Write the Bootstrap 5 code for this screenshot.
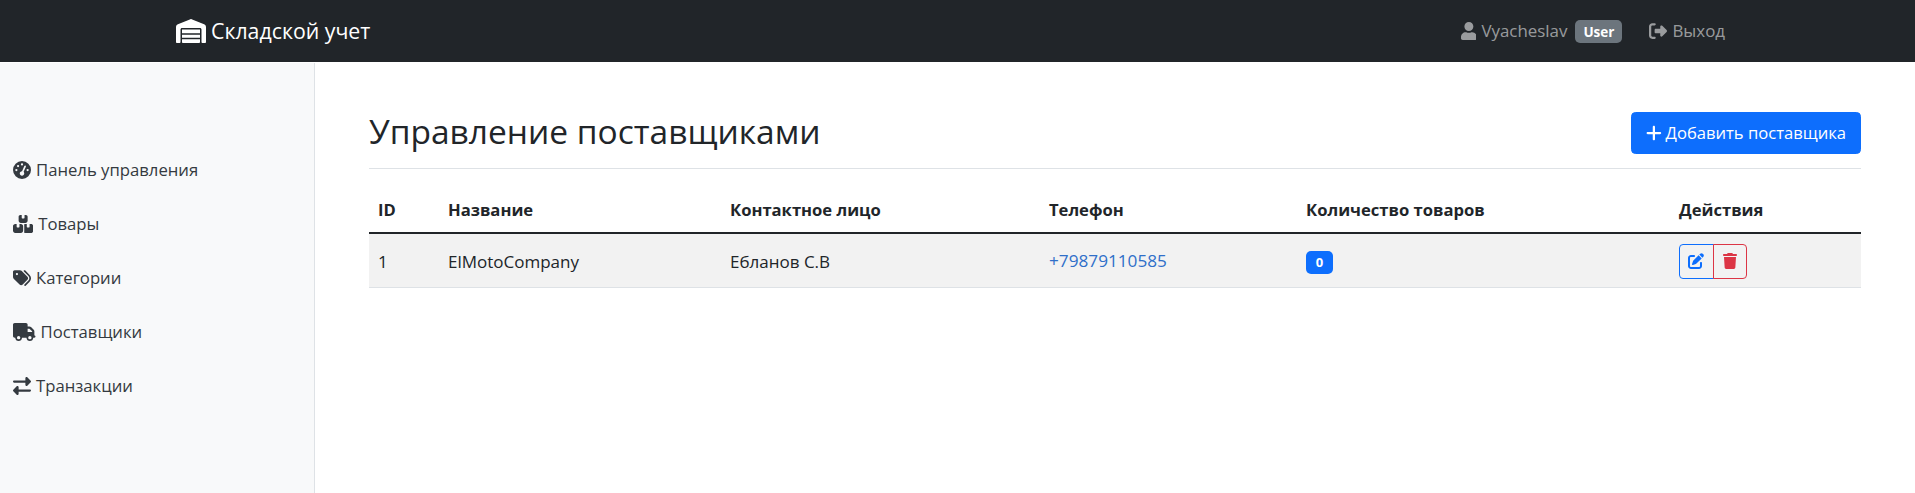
<!doctype html>
<html lang="ru">
<head>
<meta charset="utf-8">
<title>Складской учет</title>
<link href="https://cdn.jsdelivr.net/npm/bootstrap@5.3.0/dist/css/bootstrap.min.css" rel="stylesheet">
<style>
body{font-family:"Open Sans","Noto Sans",sans-serif;font-size:17px;color:#212529;height:493px;overflow:hidden}
.ic{fill:currentColor;height:18px;width:auto;flex:none;display:inline-block}
.topbar{height:62px;padding:0 190px 0 176px;background:#212529}
.topbar .navbar-brand{font-size:21.3px;margin:0;padding:0;color:#fff}
.brand-ic{height:24px;vertical-align:-4px;margin-right:5px}
.top-link{color:rgba(255,255,255,.55);text-decoration:none;font-size:16.9px;gap:5px}
.top-pill{background:#6c757d;font-size:13.5px;padding:2px 8px 0;height:23px;line-height:21px;border-radius:5px;font-weight:700;margin-top:1px}
.top-gap{margin-left:27px}
.shell{height:431px}
.side{width:315px;flex:none;background:#f8f9fa;border-right:1px solid #dee2e6;padding:80px 0 0 13px;margin-top:1px}
.side .nav-link{color:#343a40;padding:0;height:54px;display:flex;align-items:center;gap:5px;font-size:16.7px}
.content{padding:49px 54px 0;min-width:0}
.head-row{height:58px;border-bottom:1px solid #dee2e6;padding-bottom:13px;margin-bottom:20px}
.head-row h2{font-size:33.5px;font-weight:400;margin:0 0 4px}
.add-btn{height:42px;padding:0 14px;font-size:16.6px;display:flex;align-items:center;gap:4px;border-radius:4.5px}
.sup-table{table-layout:fixed;margin:0}
.sup-table th{border-bottom:2px solid #212529;height:44px;padding:0 9px;vertical-align:middle;font-size:16.6px}
.sup-table td{height:54px;padding:2px 9px 0;vertical-align:middle;background:#f2f2f2}
.w1{width:70px}.w2{width:282px}.w3{width:319px}.w4{width:257px}.w5{width:373px}
.tel-link{text-decoration:none;color:#2f6fc9;font-size:17.2px}
.zero{font-size:13px;padding:0;width:27px;height:23px;line-height:23px;border-radius:5px;background:#0d6efd}
.act-group .btn{width:34.5px;height:35px;padding:0;display:flex;align-items:center;justify-content:center;border-radius:4px}
.act-group .ic{height:16px}
</style>
</head>
<body>
<nav class="navbar navbar-dark topbar justify-content-between">
  <a class="navbar-brand" href="#"><svg class="ic brand-ic" viewBox="0 0 640 512"><path d="M0 488V171.3c0-26.2 15.9-49.7 40.2-59.4L308.1 4.8c7.6-3.1 16.1-3.1 23.8 0L599.8 111.9c24.3 9.7 40.2 33.3 40.2 59.4V488c0 13.3-10.7 24-24 24H568c-13.3 0-24-10.7-24-24V224c0-17.7-14.3-32-32-32H128c-17.7 0-32 14.3-32 32V488c0 13.3-10.7 24-24 24H24c-13.3 0-24-10.7-24-24zm488 24H152c-13.3 0-24-10.7-24-24V432H512v56c0 13.3-10.7 24-24 24zM128 400V336H512v64H128zm0-96V224H512v80H128z"/></svg>Складской учет</a>
  <div class="d-flex align-items-center">
    <span class="top-link d-flex align-items-center"><svg class="ic" viewBox="0 0 448 512"><path d="M224 256c70.7 0 128-57.3 128-128S294.7 0 224 0 96 57.3 96 128s57.3 128 128 128zm89.6 32h-16.7c-22.2 10.2-46.9 16-72.9 16s-50.6-5.8-72.9-16h-16.7C60.2 288 0 348.2 0 422.4V464c0 26.5 21.5 48 48 48h352c26.5 0 48-21.5 48-48v-41.6c0-74.2-60.2-134.4-134.4-134.4z"/></svg>Vyacheslav</span>
    <span class="badge top-pill ms-2">User</span>
    <a class="top-link top-gap d-flex align-items-center" href="#"><svg class="ic" viewBox="0 0 512 512"><path d="M377.9 105.9L500.7 228.7c7.2 7.2 11.3 17.1 11.3 27.3s-4.1 20.1-11.3 27.3L377.9 406.1c-6.4 6.4-15 9.9-24 9.9c-18.7 0-33.9-15.2-33.9-33.9l0-62.1-128 0c-17.7 0-32-14.3-32-32l0-64c0-17.7 14.3-32 32-32l128 0 0-62.1c0-18.7 15.2-33.9 33.9-33.9c9 0 17.6 3.6 24 9.9zM160 96L96 96c-17.7 0-32 14.3-32 32l0 256c0 17.7 14.3 32 32 32l64 0c17.7 0 32 14.3 32 32s-14.3 32-32 32l-64 0c-53 0-96-43-96-96L0 128C0 75 43 32 96 32l64 0c17.7 0 32 14.3 32 32s-14.3 32-32 32z"/></svg>Выход</a>
  </div>
</nav>
<div class="d-flex shell">
  <aside class="side">
    <nav class="nav flex-column">
      <a class="nav-link" href="#"><svg class="ic" viewBox="0 0 512 512"><path d="M0 256a256 256 0 1 1 512 0A256 256 0 1 1 0 256zM288 96a32 32 0 1 0 -64 0 32 32 0 1 0 64 0zM256 416c35.3 0 64-28.7 64-64c0-17.4-6.9-33.1-18.1-44.6L366 161.7c5.3-12.1-.2-26.3-12.3-31.6s-26.3 .2-31.6 12.3L257.9 288c-.6 0-1.3 0-1.9 0c-35.3 0-64 28.7-64 64s28.7 64 64 64zM176 144a32 32 0 1 0 -64 0 32 32 0 1 0 64 0zM96 288a32 32 0 1 0 0-64 32 32 0 1 0 0 64zm352-32a32 32 0 1 0 -64 0 32 32 0 1 0 64 0z"/></svg>Панель управления</a>
      <a class="nav-link" href="#"><svg class="ic" viewBox="0 0 576 512"><path d="M248 0H208c-26.5 0-48 21.5-48 48V160c0 35.3 28.7 64 64 64H352c35.3 0 64-28.7 64-64V48c0-26.5-21.5-48-48-48H328V80c0 8.8-7.2 16-16 16H264c-8.8 0-16-7.2-16-16V0zM64 256c-35.3 0-64 28.7-64 64V448c0 35.3 28.7 64 64 64H224c35.3 0 64-28.7 64-64V320c0-35.3-28.7-64-64-64H184v80c0 8.8-7.2 16-16 16H120c-8.8 0-16-7.2-16-16V256H64zM352 512H512c35.3 0 64-28.7 64-64V320c0-35.3-28.7-64-64-64H472v80c0 8.8-7.2 16-16 16H408c-8.8 0-16-7.2-16-16V256H352c-15 0-28.8 5.1-39.7 13.8c4.9 10.4 7.7 22 7.7 34.2V464c0 12.2-2.8 23.8-7.7 34.2C323.2 506.9 337 512 352 512z"/></svg>Товары</a>
      <a class="nav-link" href="#"><svg class="ic" viewBox="0 0 512 512"><path d="M345 39.1L472.8 168.4c52.4 53 52.4 138.2 0 191.2L360.8 472.9c-9.3 9.4-24.5 9.5-33.9 .2s-9.5-24.5-.2-33.9L438.6 325.9c33.9-34.3 33.9-89.4 0-123.7L310.9 72.9c-9.3-9.4-9.2-24.6 .2-33.9s24.6-9.2 33.9 .2zM0 229.5V80C0 53.5 21.5 32 48 32H197.5c17 0 33.3 6.7 45.3 18.7l168 168c25 25 25 65.5 0 90.5L277.3 442.7c-25 25-65.5 25-90.5 0l-168-168C6.7 262.7 0 246.5 0 229.5zM144 144a32 32 0 1 0 -64 0 32 32 0 1 0 64 0z"/></svg>Категории</a>
      <a class="nav-link" href="#"><svg class="ic" viewBox="0 0 640 512"><path d="M48 0C21.5 0 0 21.5 0 48V368c0 26.5 21.5 48 48 48H64c0 53 43 96 96 96s96-43 96-96H384c0 53 43 96 96 96s96-43 96-96h32c17.7 0 32-14.3 32-32s-14.3-32-32-32V288 256 237.3c0-17-6.7-33.3-18.7-45.3L512 114.7c-12-12-28.3-18.7-45.3-18.7H416V48c0-26.5-21.5-48-48-48H48zM416 160h50.7L544 237.3V256H416V160zM112 416a48 48 0 1 1 96 0 48 48 0 1 1 -96 0zm368-48a48 48 0 1 1 0 96 48 48 0 1 1 0-96z"/></svg>Поставщики</a>
      <a class="nav-link" href="#"><svg class="ic" viewBox="0 0 512 512"><path d="M32 96l320 0V32c0-12.9 7.8-24.6 19.8-29.6s25.7-2.2 34.9 6.9l96 96c6 6 9.4 14.1 9.4 22.6s-3.4 16.6-9.4 22.6l-96 96c-9.2 9.2-22.9 11.9-34.9 6.9s-19.8-16.6-19.8-29.6V160L32 160c-17.7 0-32-14.3-32-32s14.3-32 32-32zM480 352c17.7 0 32 14.3 32 32s-14.3 32-32 32H160v64c0 12.9-7.8 24.6-19.8 29.6s-25.7 2.2-34.9-6.9l-96-96c-6-6-9.4-14.1-9.4-22.6s3.4-16.6 9.4-22.6l96-96c9.2-9.2 22.9-11.9 34.9-6.9s19.8 16.6 19.8 29.6l0 64H480z"/></svg>Транзакции</a>
    </nav>
  </aside>
  <main class="content flex-grow-1">
    <div class="d-flex justify-content-between align-items-center head-row">
      <h2>Управление поставщиками</h2>
      <button class="btn btn-primary add-btn"><svg class="ic" viewBox="0 0 448 512"><path d="M256 80c0-17.7-14.3-32-32-32s-32 14.3-32 32V224H48c-17.7 0-32 14.3-32 32s14.3 32 32 32H192V432c0 17.7 14.3 32 32 32s32-14.3 32-32V288H400c17.7 0 32-14.3 32-32s-14.3-32-32-32H256V80z"/></svg>Добавить поставщика</button>
    </div>
    <table class="table sup-table">
      <thead><tr>
        <th class="w1">ID</th><th class="w2">Название</th><th class="w3">Контактное лицо</th><th class="w4">Телефон</th><th class="w5">Количество товаров</th><th>Действия</th>
      </tr></thead>
      <tbody><tr>
        <td>1</td><td>ElMotoCompany</td><td>Ебланов С.В</td><td><a class="tel-link" href="#">+79879110585</a></td>
        <td><span class="badge zero">0</span></td>
        <td><div class="btn-group act-group">
          <button class="btn btn-outline-primary"><svg class="ic" viewBox="0 0 512 512"><path d="M471.6 21.7c-21.9-21.9-57.3-21.9-79.2 0L362.3 51.7l97.9 97.9 30.1-30.1c21.9-21.9 21.9-57.3 0-79.2L471.6 21.7zm-299.2 220c-6.1 6.1-10.8 13.6-13.5 21.9l-29.6 88.8c-2.9 8.6-.6 18.1 5.8 24.6s15.9 8.7 24.6 5.8l88.8-29.6c8.2-2.7 15.7-7.4 21.9-13.5L437.7 172.3 339.7 74.3 172.4 241.7zM96 64C43 64 0 107 0 160V416c0 53 43 96 96 96H352c53 0 96-43 96-96V320c0-17.7-14.3-32-32-32s-32 14.3-32 32v96c0 17.7-14.3 32-32 32H96c-17.7 0-32-14.3-32-32V160c0-17.7 14.3-32 32-32h96c17.7 0 32-14.3 32-32s-14.3-32-32-32H96z"/></svg></button>
          <button class="btn btn-outline-danger"><svg class="ic" viewBox="0 0 448 512"><path d="M135.2 17.7L128 32H32C14.3 32 0 46.3 0 64S14.3 96 32 96H416c17.7 0 32-14.3 32-32s-14.3-32-32-32H320l-7.2-14.3C307.4 6.8 296.3 0 284.2 0H163.8c-12.1 0-23.2 6.8-28.6 17.7zM416 128H32L53.2 467c1.6 25.3 22.6 45 47.9 45H346.9c25.3 0 46.3-19.7 47.9-45L416 128z"/></svg></button>
        </div></td>
      </tr></tbody>
    </table>
  </main>
</div>
<script src="https://cdn.jsdelivr.net/npm/bootstrap@5.3.0/dist/js/bootstrap.bundle.min.js"></script>
</body>
</html>
